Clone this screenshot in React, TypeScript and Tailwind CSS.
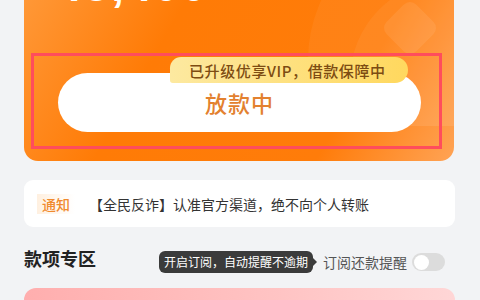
import React from 'react';

function CardDecor() {
  return (
    <svg className="absolute right-0 top-0 pointer-events-none" width="180" height="180" viewBox="0 0 180 180">
      <circle cx="176" cy="114" r="142" fill="#ffffff" fillOpacity="0.05" />
      <circle cx="176" cy="134" r="100" fill="#ffffff" fillOpacity="0.05" />
      <rect x="115" y="61" width="42" height="42" rx="9" transform="rotate(45 136 82)" fill="#ffffff" fillOpacity="0.08" />
    </svg>
  );
}

export default function App() {
  return (
    <div className="w-[480px] h-[300px] overflow-hidden bg-[#f2f3f5] font-['Noto_Sans_CJK_SC','Noto_Sans',sans-serif]">
      <div className="relative ml-[24px] w-[430px] -mt-[54px] pt-[16px] pb-[12px] rounded-[14px] overflow-hidden bg-[linear-gradient(120deg,#ff9d40_0%,#ff7b06_35%,#ff7c0a_75%,#ffa355_100%)]">
        <CardDecor />
        <div className="relative ml-[32px] h-[44px] text-[46px] leading-none font-bold text-white font-['Liberation_Sans',sans-serif] tracking-[2px]">
          48,400
        </div>
        <div className="relative mt-[47px] ml-[7px] mr-[12px] border-[3px] border-[#ff4d5c] pt-[17px] pb-[14px] pl-[24px] pr-[18px]">
          <div className="h-[59px] rounded-full bg-white flex items-center justify-center">
            <span className="text-[22px] font-medium text-[#e3812f] tracking-[1px]">放款中</span>
          </div>
          <div className="absolute left-[136px] top-[1px] w-[238px] h-[26px] rounded-tl-[12px] rounded-bl-[3px] rounded-r-[14px] bg-[linear-gradient(90deg,#fde9a0_0%,#ffd85e_100%)] flex items-center pl-[19px]">
            <span className="text-[15px] leading-none font-medium tracking-[0.6px] text-[#7d4c12]">已升级优享VIP，借款保障中</span>
          </div>
        </div>
      </div>

      <div className="ml-[24px] w-[431px] mt-[19px] h-[47px] bg-white rounded-[9px] flex items-center">
        <div className="ml-[13px] h-[20px] px-[5px] flex items-center bg-[linear-gradient(90deg,#fff0e0,#ffffff)]">
          <span className="text-[14px] font-medium text-[#f08a2e] leading-none">通知</span>
        </div>
        <span className="ml-[14px] text-[14px] text-[#333333] leading-none">【全民反诈】认准官方渠道，绝不向个人转账</span>
      </div>

      <div className="ml-[24px] w-[431px] mt-[20px] h-[30px] flex items-center pr-[10px]">
        <span className="text-[18px] font-bold text-[#222222] leading-none pb-[8px]">款项专区</span>
        <div className="ml-auto flex items-center">
          <div className="relative h-[22px] w-[154px] rounded-[6px] bg-[#3b3b3b] flex items-center justify-center">
            <span className="text-[12px] text-white leading-none">开启订阅，自动提醒不逾期</span>
            <div className="absolute -right-[4px] top-1/2 -translate-y-1/2 w-0 h-0 border-y-[5px] border-y-transparent border-l-[5px] border-l-[#3b3b3b]" />
          </div>
          <span className="ml-[10px] text-[14px] text-[#555555] leading-none">订阅还款提醒</span>
          <div className="ml-[5px] w-[33px] h-[18px] rounded-full bg-[#dcdcdc] flex items-center pl-[2px]">
            <div className="w-[15px] h-[15px] rounded-full bg-white" />
          </div>
        </div>
      </div>

      <div className="ml-[24px] w-[431px] mt-[11px] h-[40px] rounded-t-[12px] bg-[linear-gradient(90deg,#ffaeae_0%,#ffc4c4_60%,#ffd6d6_100%)]" />
    </div>
  );
}
